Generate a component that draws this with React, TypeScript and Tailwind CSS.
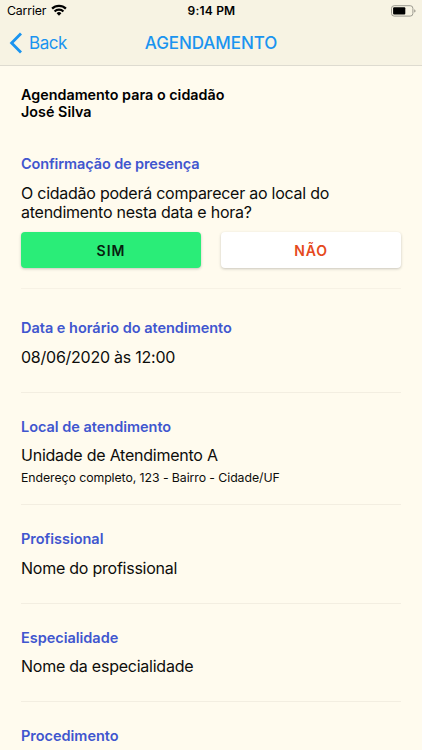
import type { ReactNode } from 'react';

function StatusBar() {
  return (
    <div className="grid h-[22px] grid-cols-3 items-center pl-[7px] pr-[6px] text-[12px] leading-[22px] text-black">
      <div className="flex items-center gap-[5px]">
        <span className="text-[12.3px] tracking-[-0.15px]">Carrier</span>
        <svg width="16" height="12" viewBox="0 0 16 12" fill="none" stroke="#000" strokeWidth="2.3" className="mt-[-2px]">
          <path d="M1.1 4.6a9.9 9.9 0 0 1 13.8 0" />
          <path d="M3.6 7.5a6.2 6.2 0 0 1 8.8 0" />
          <path d="M8 11.7 5.6 9.2a3.4 3.4 0 0 1 4.8 0Z" fill="#000" stroke="none" />
        </svg>
      </div>
      <span className="text-center text-[12px] font-semibold tracking-[0.2px]">9:14 PM</span>
      <svg width="26" height="12" viewBox="0 0 26 12" className="mt-[-1px] justify-self-end">
        <rect x="1.5" y="0.7" width="21.4" height="10.4" rx="2.7" fill="none" stroke="#9c9a90" strokeWidth="1" />
        <rect x="3.1" y="2.3" width="12.2" height="7.2" rx="1" fill="#000" />
        <path d="M24.3 4.2v3.4c1.6-.5 1.6-2.9 0-3.4Z" fill="#8b897f" />
      </svg>
    </div>
  );
}

function NavBar() {
  return (
    <div className="grid h-[43px] grid-cols-[1fr_auto_1fr] items-center text-[#1a94f0]">
      <div className="flex items-center gap-[6px] pl-[9px] pt-px">
        <svg width="14" height="22" viewBox="0 0 14 22" fill="none" stroke="currentColor" strokeWidth="2.8" className="-mt-[3px]">
          <path d="M12 1.4 2.6 11l9.4 9.6" />
        </svg>
        <span className="-mt-[3px] text-[17px] leading-[22px] tracking-[-0.45px]">Back</span>
      </div>
      <h1 className="-mt-[2px] text-[17px] font-medium leading-[22px] tracking-[-0.08px]">AGENDAMENTO</h1>
      <span />
    </div>
  );
}

function Heading({ children }: { children: ReactNode }) {
  return <h2 className="text-[14.5px] font-semibold leading-[20px] tracking-[-0.02px] text-[#4056cf]">{children}</h2>;
}

function Field({ label, value, detail }: { label: string; value?: string; detail?: string }) {
  return (
    <section className="border-b border-[#f3eee1] pb-[25px] pt-[24px]">
      <Heading>{label}</Heading>
      {value && <p className="mt-[9.5px] text-[16px] leading-[19px] tracking-[-0.24px]">{value}</p>}
      {detail && <p className="-mb-[8px] mt-[4px] text-[12.3px] leading-[18px] tracking-[-0.07px]">{detail}</p>}
    </section>
  );
}

export default function App() {
  return (
    <div className="h-[750px] overflow-hidden bg-[#fffbee] font-['Inter',sans-serif] text-[#0d0d0b]">
      <header className="h-[66px] border-b border-[#dedbd0] bg-[#f7f3e3]">
        <StatusBar />
        <NavBar />
      </header>
      <main className="px-[21px]">
        <p className="pt-[20px] text-[14.3px] font-semibold leading-[17px] tracking-[0.03px] text-black">
          Agendamento para o cidadão
          <br />
          José Silva
        </p>
        <section className="border-b border-[#f7f2e5] pb-[20px] pt-[34px]">
          <Heading>
            <span className="tracking-[-0.12px]">Confirmação de presença</span>
          </Heading>
          <p className="mt-[10px] text-[16px] leading-[19px] tracking-[-0.25px]">
            O cidadão poderá comparecer ao local do
            <br />
            atendimento nesta data e hora?
          </p>
          <div className="mt-[10px] grid grid-cols-2 gap-[20px]">
            <button className="h-[36px] rounded-[4px] bg-[#2aed78] text-[14px] font-semibold tracking-[1px] text-[#07200f] shadow-[0_1px_3px_rgba(0,0,0,0.22)]">
              SIM
            </button>
            <button className="h-[36px] rounded-[4px] bg-white text-[14px] font-semibold tracking-[0.8px] text-[#e5491c] shadow-[0_1px_3px_rgba(0,0,0,0.22)]">
              NÃO
            </button>
          </div>
        </section>
        <div className="pt-[5px]">
          <Field label="Data e horário do atendimento" value="08/06/2020 às 12:00" />
          <Field
            label="Local de atendimento"
            value="Unidade de Atendimento A"
            detail="Endereço completo, 123 - Bairro - Cidade/UF"
          />
          <Field label="Profissional" value="Nome do profissional" />
          <Field label="Especialidade" value="Nome da especialidade" />
          <Field label="Procedimento" />
        </div>
      </main>
    </div>
  );
}
